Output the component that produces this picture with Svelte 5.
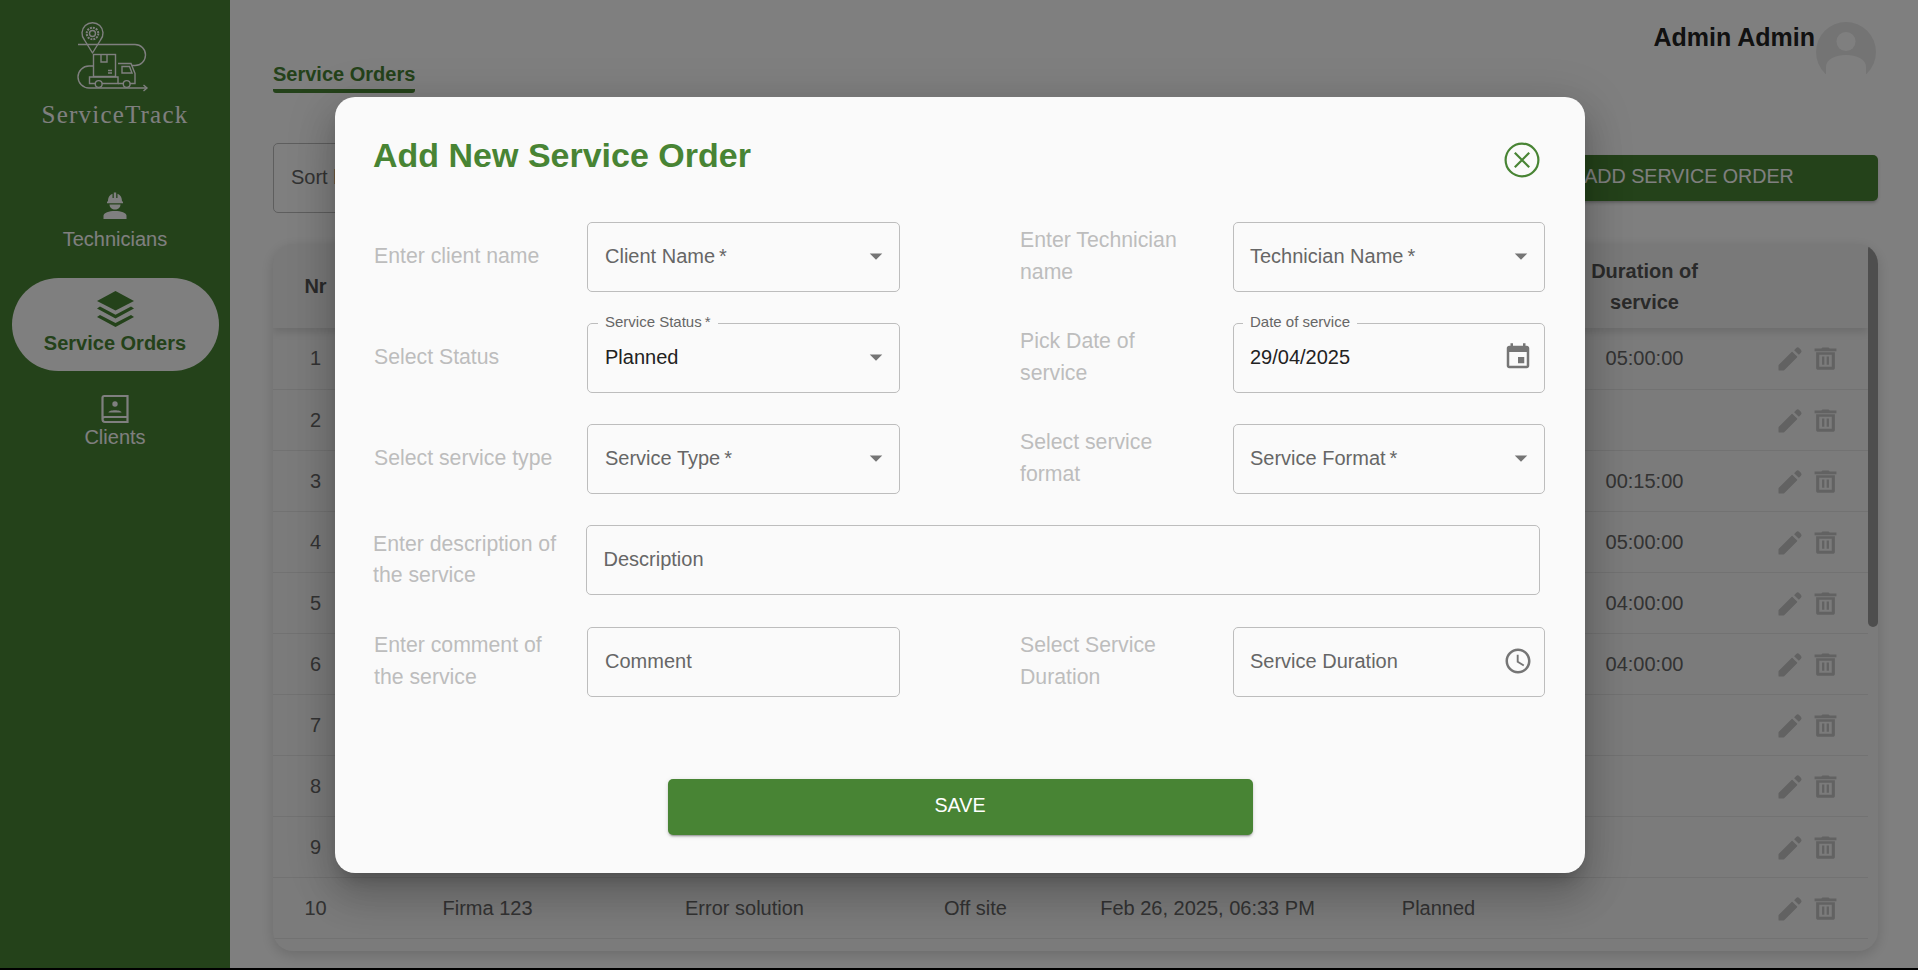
<script>
  // table rows, the first nine sit mostly behind the dialog
  const orders = [
    { nr: 1, client: "Firma 123", type: "Installation", format: "On site", date: "Feb 20, 2025, 09:00 AM", status: "Done", duration: "05:00:00" },
    { nr: 2, client: "Firma 123", type: "Maintenance", format: "On site", date: "Feb 21, 2025, 10:15 AM", status: "Planned", duration: "" },
    { nr: 3, client: "Firma 123", type: "Error solution", format: "Off site", date: "Feb 21, 2025, 01:30 PM", status: "Done", duration: "00:15:00" },
    { nr: 4, client: "Firma 123", type: "Installation", format: "On site", date: "Feb 24, 2025, 08:00 AM", status: "Done", duration: "05:00:00" },
    { nr: 5, client: "Firma 123", type: "Maintenance", format: "On site", date: "Feb 24, 2025, 02:00 PM", status: "Done", duration: "04:00:00" },
    { nr: 6, client: "Firma 123", type: "Maintenance", format: "On site", date: "Feb 25, 2025, 09:30 AM", status: "Done", duration: "04:00:00" },
    { nr: 7, client: "Firma 123", type: "Error solution", format: "Off site", date: "Feb 25, 2025, 03:45 PM", status: "Planned", duration: "" },
    { nr: 8, client: "Firma 123", type: "Error solution", format: "Off site", date: "Feb 26, 2025, 11:00 AM", status: "Planned", duration: "" },
    { nr: 9, client: "Firma 123", type: "Error solution", format: "Off site", date: "Feb 26, 2025, 04:20 PM", status: "Planned", duration: "" },
    { nr: 10, client: "Firma 123", type: "Error solution", format: "Off site", date: "Feb 26, 2025, 06:33 PM", status: "Planned", duration: "" }
  ];
</script>

{#snippet arrow()}
  <svg class="adorn arrow" viewBox="0 0 24 24"><path d="M7 10l5 5 5-5z" /></svg>
{/snippet}

{#snippet calendar()}
  <svg class="adorn" viewBox="0 0 24 24"><path d="M17 12h-5v5h5v-5zM16 1v2H8V1H6v2H5c-1.11 0-1.99.9-1.99 2L3 19c0 1.1.89 2 2 2h14c1.1 0 2-.9 2-2V5c0-1.1-.9-2-2-2h-1V1h-2zm3 18H5V8h14v11z" /></svg>
{/snippet}

{#snippet clock()}
  <svg class="adorn" viewBox="0 0 24 24"><path d="M11.99 2C6.47 2 2 6.48 2 12s4.47 10 9.99 10C17.52 22 22 17.52 22 12S17.52 2 11.99 2zM12 20c-4.42 0-8-3.58-8-8s3.58-8 8-8 8 3.58 8 8-3.58 8-8 8z" /><path d="M12.5 7H11v6l5.25 3.15.75-1.23-4.5-2.67z" /></svg>
{/snippet}

{#snippet field(text, legend, icon, side = "")}
  <div class="field {side}">
    {#if legend}
      <span class="legend">{legend}</span>
    {/if}
    <span class={legend ? "value" : "placeholder"}>{text}</span>
    {#if icon}
      {@render icon()}
    {/if}
  </div>
{/snippet}

<div class="page">
  <aside class="sidebar">
    <svg class="logo" viewBox="0 0 110 90" fill="none" stroke="#fff" stroke-width="1.4">
      <path d="M32.5 43 L24.5 30 A10.5 10.5 0 1 1 40.5 30 Z" stroke-linejoin="round" />
      <circle cx="32.5" cy="23.5" r="5.8" stroke-dasharray="2 1" stroke-width="2" />
      <circle cx="32.5" cy="23.5" r="3" />
      <path d="M18 34.5 H75 A10.5 10.5 0 0 1 75 55.5 H72" />
      <path d="M33 56 H29 A11 11 0 0 0 29 78 H86" />
      <path d="M83.5 75 L87 78 L83.5 81" />
      <rect x="33.5" y="44.5" width="22" height="22" />
      <path d="M41 44.5 V52 H47 V44.5" />
      <path d="M48 60.5 H52 M48 63 H52" />
      <path d="M29.5 67 H58 V73.5 H29.5 Z" />
      <path d="M58 53.5 H71 L75 63.5 V73.5 H58" />
      <path d="M62 56.5 H69.5 L72 63 H62 Z" />
      <circle cx="38.7" cy="74" r="3.4" fill="#488434" />
      <circle cx="66.7" cy="74" r="3.4" fill="#488434" />
    </svg>
    <div class="brand">ServiceTrack</div>

    <nav class="nav">
      <div class="nav-item">
        <svg class="nav-icon" viewBox="0 0 30 30" fill="#fff">
          <path d="M8 11.5 C8 7 10 4.500 12.500 3.700 V8 H13.800 V2.600 H16.200 V8 H17.500 V3.700 C20 4.500 22 7 22 11.500 H23 V13.300 H7 V11.500 Z" />
          <path d="M9.500 14.500 H20.500 C20.300 17.700 18 19.600 15 19.600 C12 19.600 9.700 17.700 9.500 14.500 Z" />
          <path d="M3.500 29 V25.800 C3.500 22.800 9 21.100 15 21.100 C21 21.100 26.500 22.800 26.500 25.800 V29 Z" />
        </svg>
        <span>Technicians</span>
      </div>
      <div class="nav-item active">
        <svg class="nav-icon layers" viewBox="0 0 37 36" fill="#488434">
          <path d="M18.500 0 L37 10 L18.500 19.500 L0 10 Z" />
          <path d="M3 15.500 L18.500 23.700 L34 15.500 L37 17.500 L18.500 27.500 L0 17.500 Z" />
          <path d="M3 24 L18.500 32 L34 24 L37 26 L18.500 36 L0 26 Z" />
        </svg>
        <span>Service Orders</span>
      </div>
      <div class="nav-item clients">
        <svg class="nav-icon" viewBox="0 0 30 30" fill="none" stroke="#fff" stroke-width="2.200">
          <path d="M2.500 25 V3.800 Q2.500 2 4.300 2 H27.500 V28 H5 Q2.500 28 2.500 25 Q2.500 23 5 23 H27.500" />
          <circle cx="15" cy="10" r="2.700" fill="#fff" stroke="none" />
          <path d="M8.500 18.500 C8.500 15.500 21.500 15.500 21.500 18.500 Z" fill="#fff" stroke="none" />
        </svg>
        <span>Clients</span>
      </div>
    </nav>
  </aside>

  <main class="main">
    <div class="top">
      <div class="tab">Service Orders</div>
      <div class="user">
        <span class="user-name">Admin Admin</span>
        <svg class="avatar" viewBox="0 0 60 60">
          <circle cx="30" cy="30" r="30" fill="#e9e9e9" />
          <circle cx="30" cy="19.500" r="9.500" fill="#fff" />
          <path d="M10 60 V45 C10 37 20 33 30 33 C40 33 50 37 50 45 V60 Z" fill="#fff" />
        </svg>
      </div>
    </div>

    <div class="toolbar">
      <div class="sort">Sort by</div>
      <button class="add-btn" type="button">ADD SERVICE ORDER</button>
    </div>

    <div class="card">
      <table>
        <colgroup>
          <col style="width: 84px" />
          <col style="width: 260px" />
          <col style="width: 254px" />
          <col style="width: 208px" />
          <col style="width: 256px" />
          <col style="width: 206px" />
          <col style="width: 206px" />
          <col style="width: 121px" />
        </colgroup>
        <thead>
          <tr>
            <th>Nr</th>
            <th>Client Name</th>
            <th>Service Type</th>
            <th>Service Format</th>
            <th>Date of service</th>
            <th>Status</th>
            <th>Duration of service</th>
            <th></th>
          </tr>
        </thead>
        <tbody>
          {#each orders as order}
            <tr>
              <td>{order.nr}</td>
              <td>{order.client}</td>
              <td>{order.type}</td>
              <td>{order.format}</td>
              <td>{order.date}</td>
              <td>{order.status}</td>
              <td>{order.duration}</td>
              <td>
                <div class="actions">
                  <svg class="row-icon" viewBox="0 0 24 24">
                    <path d="M1 23 v-4.500 L13.500 6 l4.500 4.500 L5.500 23 z" stroke="#c4c4c4" stroke-width="1" stroke-linejoin="round" />
                    <path d="M15.500 4 l2-2 a2 2 0 0 1 2.800 0 l1.700 1.700 a2 2 0 0 1 0 2.800 l-2 2 z" />
                  </svg>
                  <svg class="row-icon" viewBox="0 0 24 24">
                    <path fill-rule="evenodd" d="M3 6h18v15c0 1-.8 1.800-1.800 1.800H4.800C3.800 22.800 3 22 3 21V6zm3 2.500v11.500h12V8.500H6z" />
                    <path d="M8.700 10h2.200v8H8.700zM13.100 10h2.200v8h-2.200zM1.500 2.500H8l1-1h6l1 1h6.500V5h-21z" />
                  </svg>
                </div>
              </td>
            </tr>
          {/each}
        </tbody>
      </table>
      <div class="scroll-thumb"></div>
    </div>
  </main>

  <div class="overlay">
    <div class="modal">
      <div class="modal-head">
        <h2>Add New Service Order</h2>
        <svg class="close" viewBox="0 0 42 42" fill="none" stroke="#488434" stroke-width="2.200">
          <circle cx="21" cy="21" r="16.400" />
          <path d="M13.800 13.800 L28.200 28.200 M28.200 13.800 L13.800 28.200" />
        </svg>
      </div>

      <div class="form">
        <div class="label">Enter client name</div>
        {@render field("Client Name\u2009*", "", arrow)}
        <div class="label right">Enter Technician name</div>
        {@render field("Technician Name\u2009*", "", arrow, "side")}

        <div class="label">Select Status</div>
        {@render field("Planned", "Service Status\u2009*", arrow)}
        <div class="label right">Pick Date of service</div>
        {@render field("29/04/2025", "Date of service", calendar, "side")}

        <div class="label">Select service type</div>
        {@render field("Service Type\u2009*", "", arrow)}
        <div class="label right">Select service format</div>
        {@render field("Service Format\u2009*", "", arrow, "side")}

        <div class="wide">
          <div class="label">Enter description of the service</div>
          {@render field("Description", "", null)}
        </div>

        <div class="label">Enter comment of the service</div>
        {@render field("Comment", "", null)}
        <div class="label right">Select Service Duration</div>
        {@render field("Service Duration", "", clock, "side")}
      </div>

      <button class="save" type="button">SAVE</button>
    </div>
  </div>
</div>

<style>
  :global(body) {
    background: #000;
    font-family: "Liberation Sans", Arial, sans-serif;
  }

  .page {
    position: relative;
    display: flex;
    height: 968px;
    overflow: hidden;
    background: #fff;
    font-size: 20px;
  }

  /* sidebar */
  .sidebar {
    width: 230px;
    flex-shrink: 0;
    display: flex;
    flex-direction: column;
    align-items: center;
    padding-top: 10px;
    box-sizing: border-box;
    background: #488434;
    color: #fff;
  }

  .logo {
    width: 110px;
    height: 90px;
  }

  .brand {
    font-family: "Liberation Serif", serif;
    font-size: 25px;
    line-height: 30px;
    letter-spacing: 1.2px;
  }

  .nav {
    margin-top: 60px;
    display: flex;
    flex-direction: column;
    align-items: center;
    width: 207px;
  }

  .nav-item {
    width: 100%;
    display: flex;
    flex-direction: column;
    align-items: center;
    line-height: 26px;
  }

  .nav-icon {
    width: 30px;
    height: 30px;
    margin-bottom: 6px;
  }

  .nav-item.active {
    margin-top: 26px;
    padding: 13px 0 15px;
    height: 93px;
    box-sizing: border-box;
    border-radius: 47px;
    background: #fff;
    color: #488434;
    font-weight: 700;
  }

  .nav-icon.layers {
    width: 37px;
    height: 36px;
    margin-bottom: 3px;
  }

  .nav-item.clients {
    margin-top: 23px;
  }

  .nav-item.clients .nav-icon {
    margin-bottom: 0;
  }

  /* main column */
  .main {
    flex: 1;
    min-width: 0;
    padding: 0 40px 0 43px;
  }

  .top {
    display: flex;
    justify-content: space-between;
    align-items: flex-start;
    height: 93px;
  }

  .tab {
    margin-top: 60px;
    height: 33px;
    line-height: 28px;
    box-sizing: border-box;
    border-bottom: 4px solid #488434;
    border-radius: 0 0 3px 3px;
    color: #488434;
    font-weight: 700;
  }

  .user {
    display: flex;
    align-items: flex-start;
    margin: 22px 2px 0 0;
  }

  .user-name {
    font-size: 25px;
    font-weight: 700;
    line-height: 30px;
    color: #222;
  }

  .avatar {
    width: 60px;
    height: 60px;
    margin-left: 1px;
  }

  .toolbar {
    margin-top: 50px;
    display: flex;
    justify-content: space-between;
    align-items: flex-start;
  }

  .sort {
    width: 320px;
    height: 70px;
    box-sizing: border-box;
    padding-left: 17px;
    line-height: 66px;
    border: 1px solid #bdbdbd;
    border-radius: 5px;
    color: #666;
  }

  .add-btn {
    width: 378px;
    height: 46px;
    margin-top: 12px;
    padding: 0 0 3px;
    border: none;
    border-radius: 5px;
    background: #488434;
    color: #fff;
    font: inherit;
    font-size: 19.700px;
    box-shadow: 0 3px 3px -2px rgba(0, 0, 0, 0.2), 0 2px 4px rgba(0, 0, 0, 0.14);
  }

  .card {
    position: relative;
    margin-top: 31px;
    height: 707px;
    overflow: hidden;
    border-radius: 20px;
    background: #f6f6f6;
    box-shadow: 0 4px 14px rgba(0, 0, 0, 0.16);
  }

  table {
    width: 1595px;
    table-layout: fixed;
    border-collapse: collapse;
    color: #666;
  }

  thead tr {
    height: 84px;
    box-shadow: 0 4px 8px rgba(0, 0, 0, 0.12);
    background: #f3f3f3;
    position: relative;
  }

  th {
    padding: 1px 30px 0 31px;
    font-weight: 700;
    line-height: 31px;
    color: #555;
  }

  tbody tr {
    height: 61px;
    border-bottom: 1px solid #e4e4e4;
  }

  td {
    padding: 1px 0 0 1px;
    text-align: center;
  }

  .actions {
    display: flex;
    justify-content: center;
    align-items: center;
    gap: 10px;
  }

  .row-icon {
    width: 25px;
    height: 25px;
    fill: #c4c4c4;
  }

  .scroll-thumb {
    position: absolute;
    top: 0;
    right: 0;
    width: 10px;
    height: 383px;
    border-radius: 5px;
    background: #9c9c9c;
  }

  /* dialog */
  .overlay {
    position: absolute;
    inset: 0;
    display: flex;
    padding: 97px 333px 95px 335px;
    background: rgba(0, 0, 0, 0.5);
  }

  .modal {
    flex: 1;
    display: flex;
    flex-direction: column;
    padding-top: 35px;
    border-radius: 20px;
    background: #fafafa;
    box-shadow: 0 11px 15px -7px rgba(0, 0, 0, 0.2), 0 24px 38px 3px rgba(0, 0, 0, 0.14), 0 9px 46px 8px rgba(0, 0, 0, 0.12);
  }

  .modal-head {
    display: flex;
    justify-content: space-between;
    align-items: flex-start;
    padding: 0 42px 0 38px;
    height: 49px;
  }

  h2 {
    margin: 0;
    font-size: 34px;
    line-height: 46px;
    color: #488434;
  }

  .close {
    width: 42px;
    height: 42px;
    margin-top: 7px;
  }

  .form {
    margin: 41px 0 0 39px;
    display: grid;
    grid-template-columns: 213px 313px 120px 213px 312px;
    grid-auto-rows: minmax(70px, auto);
    row-gap: 31px;
  }

  .label {
    align-self: center;
    max-width: 195px;
    padding-bottom: 1px;
    font-size: 21.250px;
    line-height: 31.500px;
    color: #bdbdbd;
  }

  .label.right {
    grid-column: 4;
    max-width: 175px;
  }

  .wide {
    grid-column: 1 / -1;
    display: grid;
    grid-template-columns: 212.500px 954px;
    height: 71px;
    margin-left: -1px;
  }

  .field {
    position: relative;
    display: flex;
    justify-content: space-between;
    align-items: center;
    box-sizing: border-box;
    height: 69.500px;
    padding: 0 11px 1px 17px;
    border: 1px solid #bdbdbd;
    border-radius: 5px;
  }

  .field.side {
    padding-left: 16px;
  }

  .placeholder {
    color: #666;
  }

  .value {
    color: #222;
  }

  .legend {
    position: absolute;
    top: -11px;
    left: 10px;
    padding: 0 7px;
    background: #fafafa;
    font-size: 15px;
    line-height: 18px;
    color: #666;
  }

  .field.side .legend {
    left: 9px;
  }

  .adorn {
    width: 30px;
    height: 30px;
    flex-shrink: 0;
    fill: #757575;
  }

  .adorn.arrow {
    margin-right: -2.500px;
  }

  .save {
    align-self: center;
    width: 585px;
    height: 56px;
    margin-top: 82px;
    padding: 0 0 4px;
    border: none;
    border-radius: 5px;
    background: #488434;
    color: #fff;
    font: inherit;
    font-size: 19.700px;
    box-shadow: 0 3px 1px -2px rgba(0, 0, 0, 0.2), 0 2px 2px rgba(0, 0, 0, 0.14), 0 1px 5px rgba(0, 0, 0, 0.12);
  }
</style>
